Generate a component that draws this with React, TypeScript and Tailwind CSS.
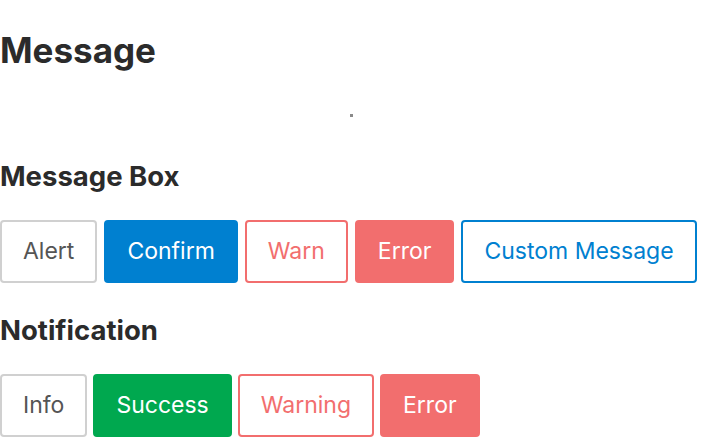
import React from 'react';

type Variant = 'default' | 'primary' | 'warnOutline' | 'error' | 'primaryOutline' | 'success';

const variantClass: Record<Variant, string> = {
  default: 'border-[#d0d0d0] bg-white text-[#555555]',
  primary: 'border-[#0080d0] bg-[#0080d0] text-white',
  warnOutline: 'border-[#f26e6e] bg-white text-[#f26e6e]',
  error: 'border-[#f26e6e] bg-[#f26e6e] text-white',
  primaryOutline: 'border-[#0080d0] bg-white text-[#0080d0]',
  success: 'border-[#00a84f] bg-[#00a84f] text-white',
};

function DemoButton({ label, variant }: { label: string; variant: Variant }) {
  return (
    <button
      className={`shrink-0 whitespace-nowrap rounded-[4px] border-2 px-[21px] py-[16px] text-[23px] leading-[27px] ${variantClass[variant]}`}
    >
      {label}
    </button>
  );
}

export default function App() {
  return (
    <div
      className="w-[702px] bg-white text-[#2b2b2b]"
      style={{ fontFamily: 'Inter, "Noto Sans", sans-serif' }}
    >
      <h1 className="pt-[28px] text-[35px] font-bold leading-[44px]">Message</h1>

      {/* tiny placeholder dot in the middle */}
      <div className="flex justify-center pt-[42px]">
        <div className="h-[3px] w-[3px] bg-[#8a8a8a]" />
      </div>

      {/* Message Box */}
      <h2 className="mt-[42px] text-[27.5px] font-bold leading-[34px]">Message Box</h2>
      <div className="mt-[27px] flex gap-[7px]">
        <DemoButton label="Alert" variant="default" />
        <DemoButton label="Confirm" variant="primary" />
        <DemoButton label="Warn" variant="warnOutline" />
        <DemoButton label="Error" variant="error" />
        <DemoButton label="Custom Message" variant="primaryOutline" />
      </div>

      {/* Notification */}
      <h2 className="mt-[30px] text-[27.5px] font-bold leading-[34px]">Notification</h2>
      <div className="mt-[27px] flex gap-[6px]">
        <DemoButton label="Info" variant="default" />
        <DemoButton label="Success" variant="success" />
        <DemoButton label="Warning" variant="warnOutline" />
        <DemoButton label="Error" variant="error" />
      </div>
    </div>
  );
}
